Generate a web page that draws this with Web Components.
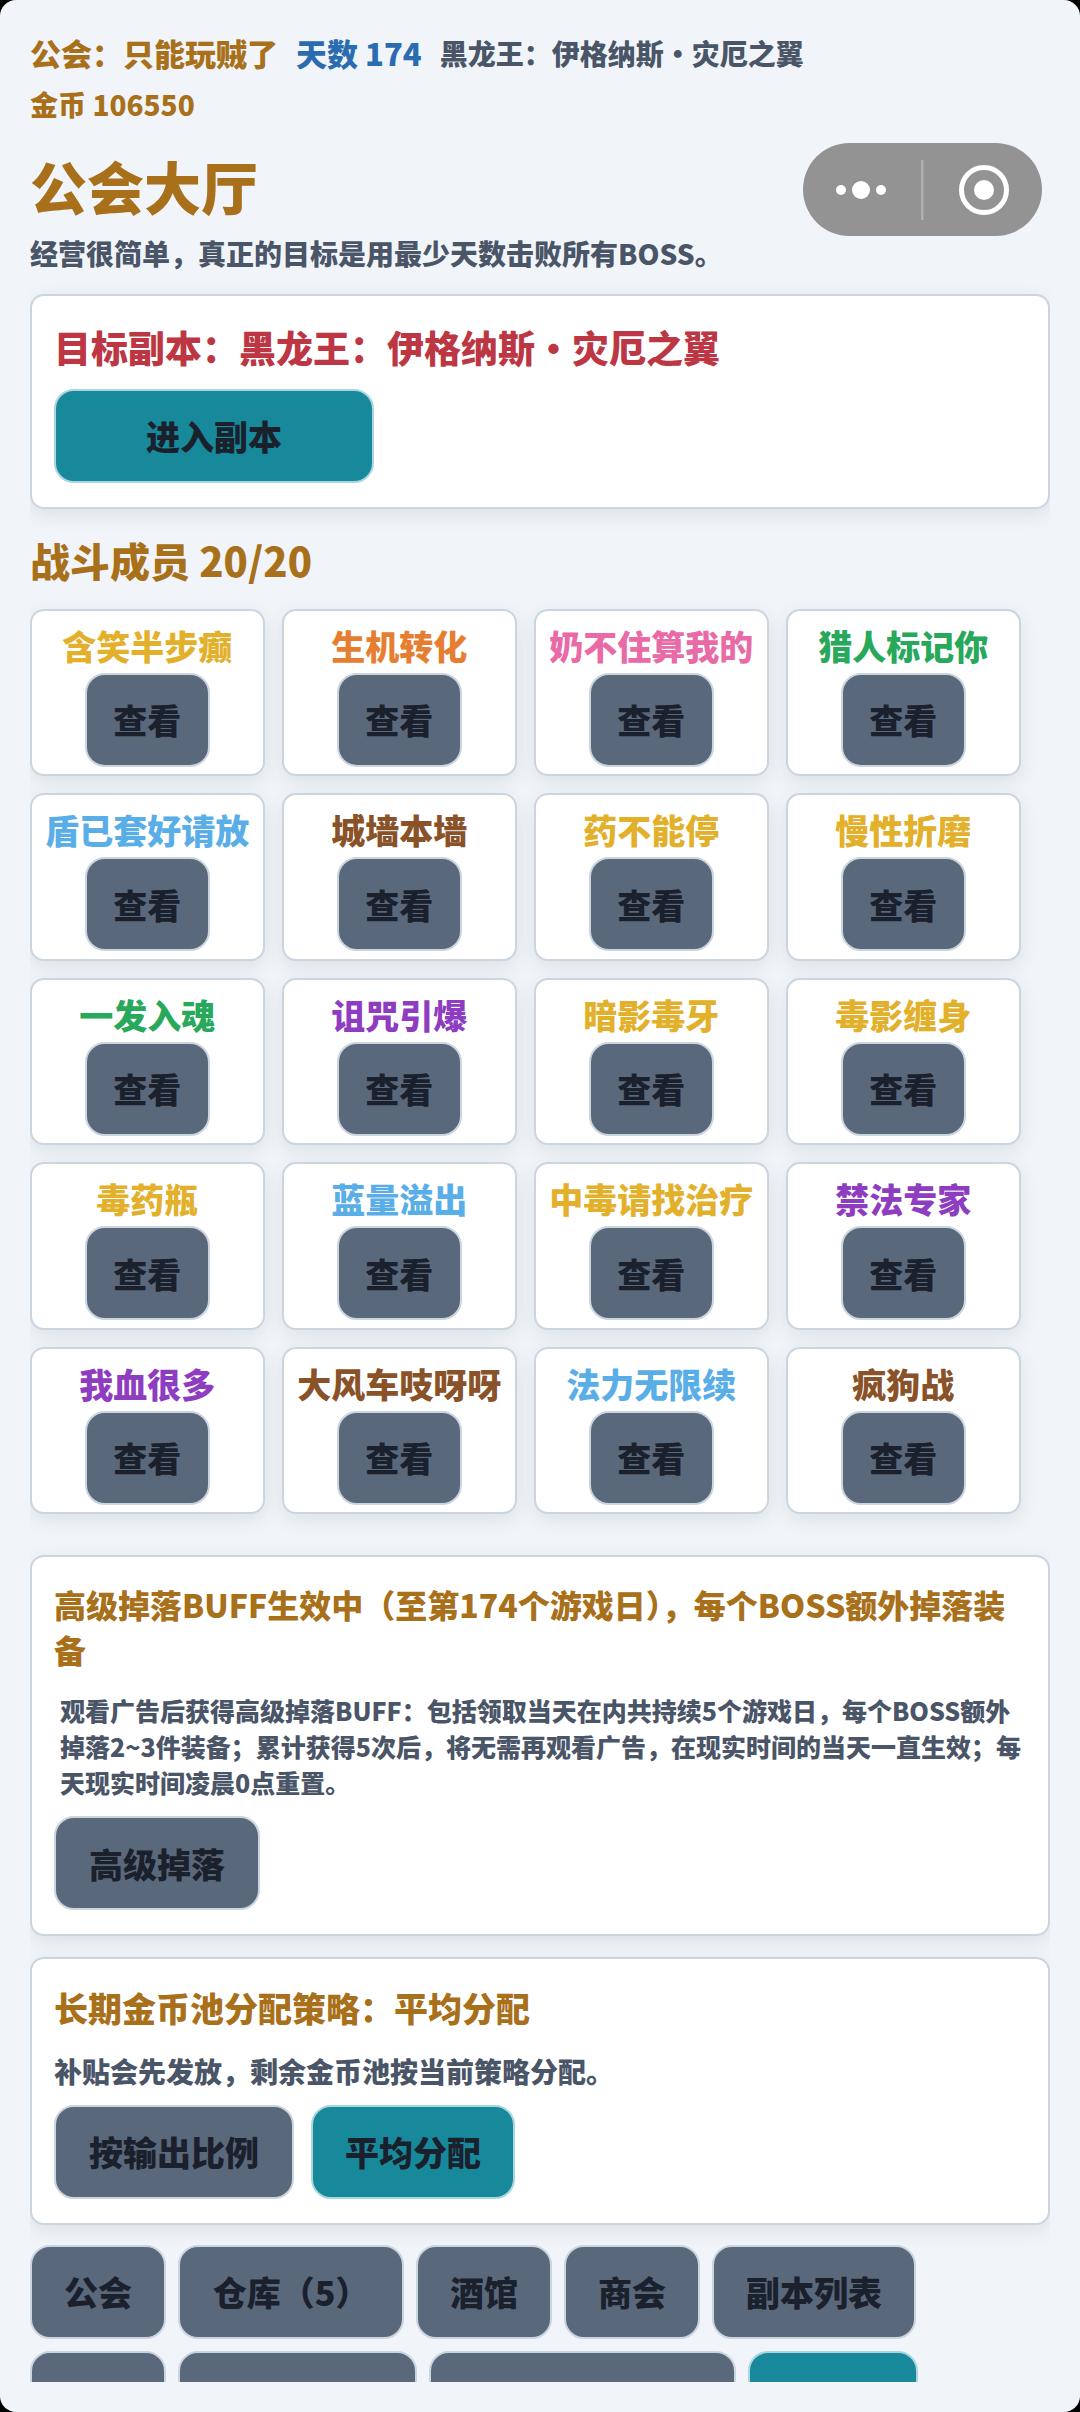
<!DOCTYPE html>
<html lang="zh">
<head>
<meta charset="utf-8">
<style>
html, body { margin: 0; height: 2412px; background: #000; overflow: hidden; }
body { font-family: "Noto Sans CJK SC", "Noto Sans", sans-serif; }
</style>
</head>
<body>
<guild-page>
  <top-bar>
    <span slot="guild">公会&#xFF1A;只能玩贼了</span>
    <span slot="day">天数 174</span>
    <span slot="boss">黑龙王&#xFF1A;伊格纳斯&#x30FB;灾厄之翼</span>
    <span slot="gold">金币 106550</span>
    <span slot="title">公会大厅</span>
    <span slot="sub">经营很简单&#xFF0C;真正的目标是用最少天数击败所有BOSS&#x3002;</span>
  </top-bar>
  <info-card>
    <card-text kind="target">目标副本&#xFF1A;黑龙王&#xFF1A;伊格纳斯&#x30FB;灾厄之翼</card-text>
    <button-row><game-btn kind="teal" width="320">进入副本</game-btn></button-row>
  </info-card>
  <section-title>战斗成员 20/20</section-title>
  <member-grid>
    <member-card color="#e2b02a">含笑半步癫</member-card>
    <member-card color="#e67e32">生机转化</member-card>
    <member-card color="#e86aa6">奶不住算我的</member-card>
    <member-card color="#27a85a">猎人标记你</member-card>
    <member-card color="#5aaee8">盾已套好请放</member-card>
    <member-card color="#8a5228">城墙本墙</member-card>
    <member-card color="#e2b02a">药不能停</member-card>
    <member-card color="#e2b02a">慢性折磨</member-card>
    <member-card color="#27a85a">一发入魂</member-card>
    <member-card color="#8e3cc0">诅咒引爆</member-card>
    <member-card color="#e2b02a">暗影毒牙</member-card>
    <member-card color="#e2b02a">毒影缠身</member-card>
    <member-card color="#e2b02a">毒药瓶</member-card>
    <member-card color="#5aaee8">蓝量溢出</member-card>
    <member-card color="#e2b02a">中毒请找治疗</member-card>
    <member-card color="#8e3cc0">禁法专家</member-card>
    <member-card color="#8e3cc0">我血很多</member-card>
    <member-card color="#8a5228">大风车吱呀呀</member-card>
    <member-card color="#5aaee8">法力无限续</member-card>
    <member-card color="#8a5228">疯狗战</member-card>
  </member-grid>
  <info-card>
    <card-text kind="buff">高级掉落BUFF生效中&#xFF08;至第174个游戏日&#xFF09;&#xFF0C;每个BOSS额外掉落装备</card-text>
    <card-text kind="note">观看广告后获得高级掉落BUFF&#xFF1A;包括领取当天在内共持续5个游戏日&#xFF0C;每个BOSS额外掉落2~3件装备&#xFF1B;累计获得5次后&#xFF0C;将无需再观看广告&#xFF0C;在现实时间的当天一直生效&#xFF1B;每天现实时间凌晨0点重置&#x3002;</card-text>
    <button-row><game-btn width="206">高级掉落</game-btn></button-row>
  </info-card>
  <info-card>
    <card-text kind="policy">长期金币池分配策略&#xFF1A;平均分配</card-text>
    <card-text kind="desc">补贴会先发放&#xFF0C;剩余金币池按当前策略分配&#x3002;</card-text>
    <button-row><game-btn width="240">按输出比例</game-btn><game-btn kind="teal" width="204">平均分配</game-btn></button-row>
  </info-card>
  <nav-buttons>
    <game-btn width="136">公会</game-btn><game-btn width="226">仓库&#xFF08;5&#xFF09;</game-btn><game-btn width="136">酒馆</game-btn><game-btn width="136">商会</game-btn><game-btn width="204">副本列表</game-btn>
    <!-- second row is cut off above its labels in the reference -->
    <game-btn width="136"></game-btn><game-btn width="239"></game-btn><game-btn width="307"></game-btn><game-btn kind="teal" width="170"></game-btn>
  </nav-buttons>
</guild-page>

<script>
class GuildPage extends HTMLElement {
  constructor() {
    super();
    this.attachShadow({ mode: 'open' });
    this.shadowRoot.innerHTML = `<style>
      :host { display: block; width: 1080px; height: 2412px; background: #f1f5f9; border-radius: 16px; overflow: hidden; box-sizing: border-box; padding: 0 30px 30px; font-weight: 900; }
      .scroll { height: 100%; overflow: hidden; padding-top: 30px; box-sizing: border-box; }
    </style><div class="scroll"><slot></slot></div>`;
  }
}

class TopBar extends HTMLElement {
  constructor() {
    super();
    this.attachShadow({ mode: 'open' });
    this.shadowRoot.innerHTML = `<style>
      :host { display: block; position: relative; }
      .line { display: flex; gap: 18px; align-items: center; height: 46px; font-size: 28px; line-height: 46px; }
      .gold { margin-top: 5px; color: #a8701a; }
      .guild { color: #a8701a; font-size: 31px; }
      .day { color: #2b6cb0; font-size: 31px; }
      .boss { color: #4a5568; }
      .title { margin-top: 18px; font-size: 57px; line-height: 80px; color: #a8701a; }
      .sub { margin-top: 8px; font-size: 28px; line-height: 40px; color: #4a5568; }
      .capsule { position: absolute; right: 8px; top: 113px; width: 239px; height: 93px; border-radius: 47px; background: #939393; }
      .capsule svg { display: block; }
    </style>
    <div class="line"><span class="guild"><slot name="guild"></slot></span><span class="day"><slot name="day"></slot></span><span class="boss"><slot name="boss"></slot></span></div>
    <div class="line gold"><slot name="gold"></slot></div>
    <div class="title"><slot name="title"></slot></div>
    <div class="sub"><slot name="sub"></slot></div>
    <div class="capsule"><svg width="239" height="93" viewBox="0 0 239 93">
      <circle cx="38" cy="47" r="5" fill="#fff"/><circle cx="58" cy="47" r="9" fill="#fff"/><circle cx="78" cy="47" r="5" fill="#fff"/>
      <rect x="118" y="17" width="2.5" height="60" fill="#b0b0b0"/>
      <circle cx="181" cy="47" r="22.5" fill="none" stroke="#fff" stroke-width="5"/><circle cx="181" cy="47" r="10" fill="#fff"/>
    </svg></div>`;
  }
}

class InfoCard extends HTMLElement {
  constructor() {
    super();
    this.attachShadow({ mode: 'open' });
    this.shadowRoot.innerHTML = `<style>
      :host { display: block; background: #fff; border: 2px solid #cbd5e0; border-radius: 14px; padding: 25px 22px 24px; box-shadow: 0 6px 18px rgba(45,55,72,.1); margin-top: 20.5px; }
    </style><slot></slot>`;
  }
}

class CardText extends HTMLElement {
  constructor() {
    super();
    this.attachShadow({ mode: 'open' });
    const kinds = {
      target: 'font-size:37px;line-height:52px;color:#bd3644;margin-bottom:16px',
      buff: 'font-size:32px;line-height:45px;color:#a8701a;margin-bottom:20px',
      policy: 'font-size:34px;line-height:48px;color:#a8701a;margin-bottom:19px',
      note: 'font-size:25px;line-height:36px;color:#4a5568;margin-bottom:16px;padding-left:6px',
      desc: 'font-size:28px;line-height:40px;color:#4a5568;margin-bottom:14px'
    };
    this.shadowRoot.innerHTML = `<style>
      :host { display: block; ${kinds[this.getAttribute('kind')]} }
    </style><slot></slot>`;
  }
}

class ButtonRow extends HTMLElement {
  constructor() {
    super();
    this.attachShadow({ mode: 'open' });
    this.shadowRoot.innerHTML = `<style>
      :host { display: flex; gap: 17px; }
    </style><slot></slot>`;
  }
}

class SectionTitle extends HTMLElement {
  constructor() {
    super();
    this.attachShadow({ mode: 'open' });
    this.shadowRoot.innerHTML = `<style>
      :host { display: block; margin-top: 23px; font-size: 40px; line-height: 56px; color: #a8701a; }
    </style><slot></slot>`;
  }
}

class MemberGrid extends HTMLElement {
  constructor() {
    super();
    this.attachShadow({ mode: 'open' });
    this.shadowRoot.innerHTML = `<style>
      :host { display: grid; grid-template-columns: repeat(4, 234.5px); gap: 17px 17.5px; margin-top: 21px; margin-bottom: 41px; }
    </style><slot></slot>`;
  }
}

class MemberCard extends HTMLElement {
  constructor() {
    super();
    this.attachShadow({ mode: 'open' });
    this.shadowRoot.innerHTML = `<style>
      :host { display: flex; flex-direction: column; align-items: center; box-sizing: border-box; height: 167.5px; background: #fff; border: 2px solid #cbd5e0; border-radius: 14px; padding-top: 12px; box-shadow: 0 6px 18px rgba(45,55,72,.1); }
      .name { font-size: 34px; line-height: 46px; white-space: nowrap; color: ${this.getAttribute('color')}; }
      game-btn { margin-top: 4px; }
    </style><div class="name"><slot></slot></div><game-btn width="125">查看</game-btn>`;
  }
}

class GameBtn extends HTMLElement {
  constructor() {
    super();
    this.attachShadow({ mode: 'open' });
    const teal = this.getAttribute('kind') === 'teal';
    this.shadowRoot.innerHTML = `<style>
      :host { display: inline-flex; align-items: center; justify-content: center; flex: none; box-sizing: border-box; height: 94px; width: ${this.getAttribute('width')}px; border-radius: 20px; font-size: 34px; white-space: nowrap; color: #1a202c; background: ${teal ? '#17899a' : '#5a687c'}; border: 2px solid ${teal ? '#a9d6e0' : '#cbd5e0'}; }
    </style><slot></slot>`;
  }
}

class NavButtons extends HTMLElement {
  constructor() {
    super();
    this.attachShadow({ mode: 'open' });
    this.shadowRoot.innerHTML = `<style>
      :host { display: flex; flex-wrap: wrap; gap: 12px; margin-top: 20px; width: 900px; }
    </style><slot></slot>`;
  }
}

customElements.define('game-btn', GameBtn);
customElements.define('guild-page', GuildPage);
customElements.define('top-bar', TopBar);
customElements.define('info-card', InfoCard);
customElements.define('card-text', CardText);
customElements.define('button-row', ButtonRow);
customElements.define('section-title', SectionTitle);
customElements.define('member-grid', MemberGrid);
customElements.define('member-card', MemberCard);
customElements.define('nav-buttons', NavButtons);
</script>
</body>
</html>
